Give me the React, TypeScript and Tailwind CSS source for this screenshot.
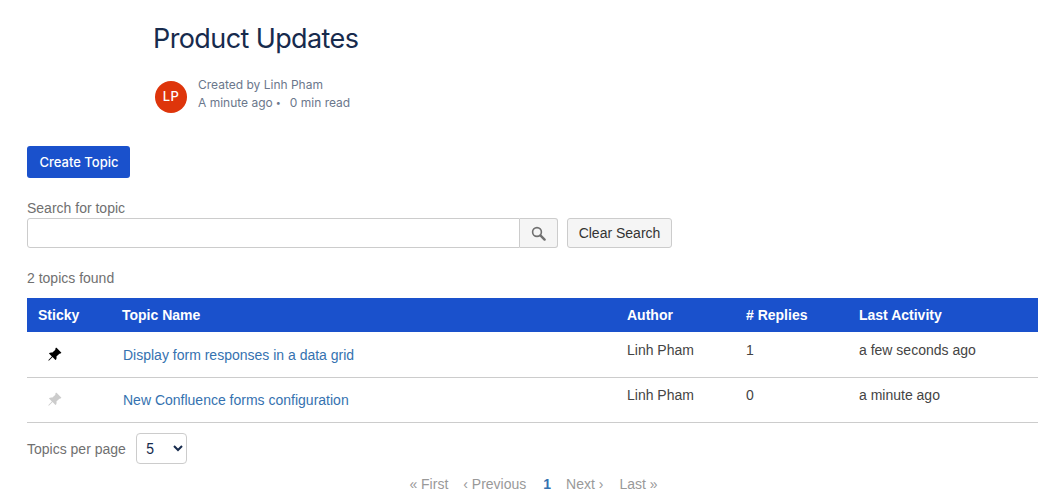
import { BsPinAngleFill } from "react-icons/bs";

const topics = [
  { name: "Display form responses in a data grid", author: "Linh Pham", replies: 1, activity: "a few seconds ago", sticky: true },
  { name: "New Confluence forms configuration", author: "Linh Pham", replies: 0, activity: "a minute ago", sticky: false },
];

function SearchIcon() {
  return (
    <svg width="15" height="15" viewBox="0 0 15 15" fill="none" stroke="#707070">
      <circle cx="6" cy="6" r="4.4" strokeWidth="1.6" />
      <path d="M9.4 9.4L13.6 13.6" strokeWidth="2.4" strokeLinecap="round" />
    </svg>
  );
}

export default function App() {
  return (
    <div className="h-[500px] w-[1045px] overflow-hidden bg-white pl-[27px] pr-[7px] font-['Liberation_Sans',sans-serif] text-[14px] text-[#444]">
      <div className="pl-[126px] pt-[22px] font-['Inter',sans-serif]">
        <h1 className="text-[27px] leading-[34px] font-normal tracking-[-0.6px] text-[#172b4d]">Product Updates</h1>
        <div className="mt-[20px] flex items-start pl-[2px]">
          <div className="mt-[5px] flex h-8 w-8 items-center justify-center rounded-full bg-[#de350b] text-[13px] font-medium tracking-[0.5px] text-white">LP</div>
          <div className="ml-[11px] text-[12px] leading-[17.5px] text-[#6b778c]">
            <div>Created by Linh Pham</div>
            <div className="flex">
              <span>A minute ago</span>
              <span className="ml-[3px] text-[9px]">•</span>
              <span className="ml-[9px]">0 min read</span>
            </div>
          </div>
        </div>
      </div>

      <button className="mt-[33px] block h-8 w-[103px] rounded-[3px] bg-[#1a51cc] pt-[1px] pl-[1px] font-['Inter',sans-serif] text-[13px] font-medium text-white">Create Topic</button>

      <div className="mt-[22px] leading-[16px] text-[#707070]">Search for topic</div>
      <div className="mt-[2px] flex h-[30px]">
        <input className="w-[493px] rounded-l-[3px] border border-[#ccc] bg-white" />
        <button className="flex w-[38px] items-center justify-center rounded-r-[3px] border border-l-0 border-[#ccc] bg-[#f5f5f5]">
          <SearchIcon />
        </button>
        <button className="ml-[9px] w-[105px] rounded-[3px] border border-[#ccc] bg-[#f5f5f5] text-[#333]">Clear Search</button>
      </div>

      <div className="mt-[22px] leading-[16px] text-[#707070]">2 topics found</div>

      <table className="mt-[12px] w-[1011px] table-fixed border-collapse">
        <thead>
          <tr className="h-[34px] bg-[#1a51cc] text-left font-bold text-white">
            <th className="w-[85px] pl-[11px]">Sticky</th>
            <th className="w-[505px] pl-[10px]">Topic Name</th>
            <th className="w-[119px] pl-[10px]">Author</th>
            <th className="w-[113px] pl-[10px]">
              # Replies
            </th>
            <th className="pl-[10px]">Last Activity</th>
          </tr>
        </thead>
        <tbody>
          {topics.map((t, i) => {
            const cell = i === 0 ? "pt-[8px] pl-[10px]" : "pt-[7px] pl-[10px]";
            return (
              <tr key={t.name} className="h-[45px] border-b border-[#ccc] align-top">
                <td className={i === 0 ? "pt-[15px]" : "pt-[14px]"}>
                  <BsPinAngleFill className={`ml-[20px] h-[15px] w-[15px] ${t.sticky ? "text-black" : "text-[#ccc]"}`} />
                </td>
                <td className={`${i === 0 ? "pt-[13px]" : "pt-[12px]"} pl-[11px] text-[#3572b0]`}>{t.name}</td>
                <td className={cell}>{t.author}</td>
                <td className={cell}>{t.replies}</td>
                <td className={cell}>{t.activity}</td>
              </tr>
            );
          })}
        </tbody>
      </table>

      <div className="mt-[10px] flex items-center">
        <span className="pt-[2px] text-[#707070]">Topics per page</span>
        <select className="ml-[10px] h-[31px] w-[51px] rounded-[4px] border border-[#ccc] bg-white pl-[5px] font-['Inter',sans-serif] text-[14px] text-[#172b4d]">
          <option>5</option>
        </select>
      </div>

      <div className="mt-[12px] flex justify-center pl-[2px] leading-[16px] text-[#999]">
        <span>« First</span>
        <span className="ml-[15px]">‹ Previous</span>
        <span className="ml-[17px] font-bold text-[#3572b0]">1</span>
        <span className="ml-[15px]">Next ›</span>
        <span className="ml-[16px]">Last »</span>
      </div>
    </div>
  );
}
